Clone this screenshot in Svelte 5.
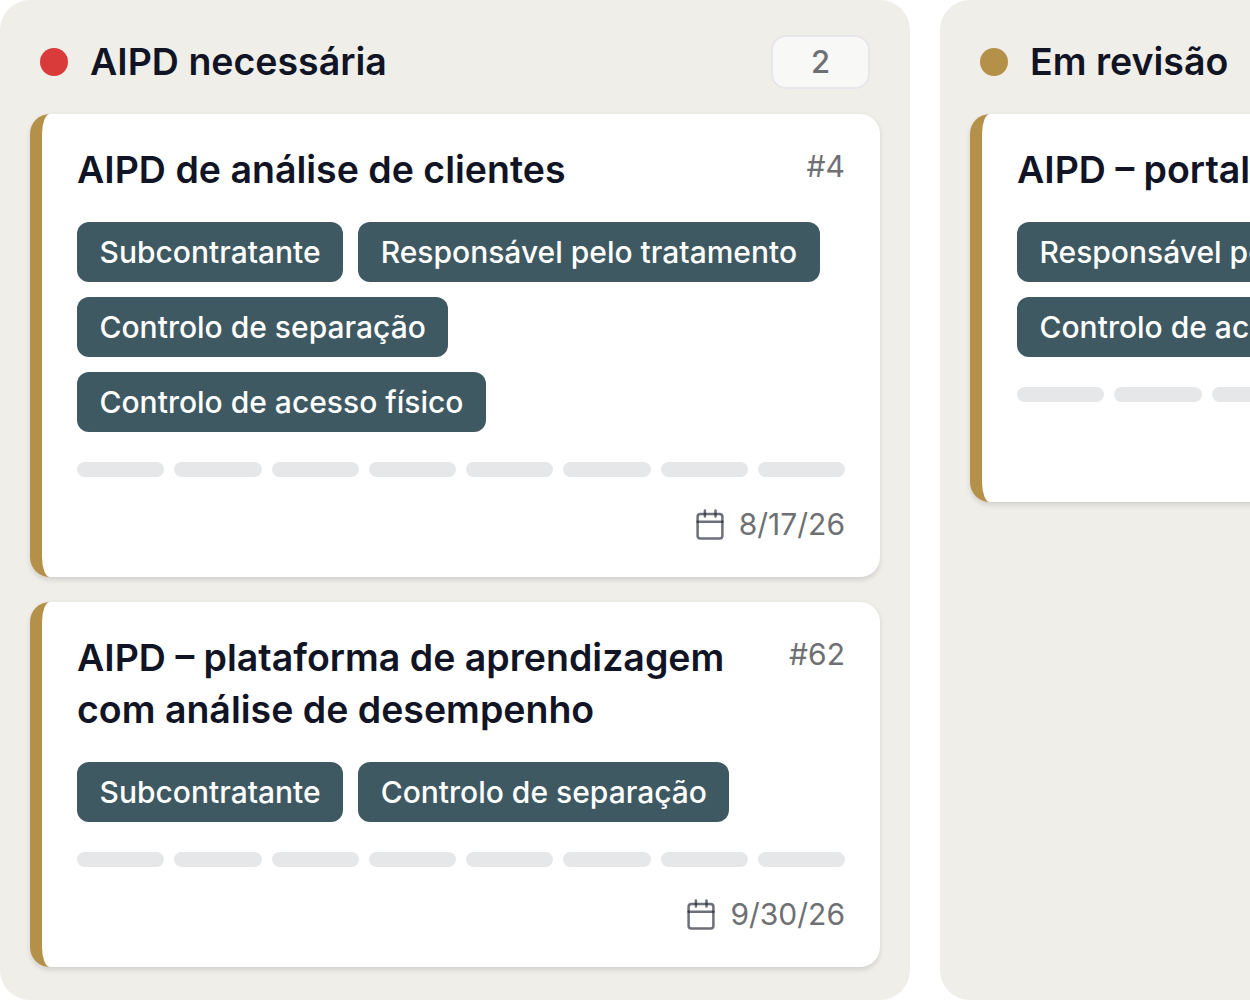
<script lang="ts">
	type Card = {
		id?: number;
		title: string;
		tags: string[];
		due?: string;
	};

	type Column = {
		name: string;
		tone: 'danger' | 'warning';
		count?: number;
		cards: Card[];
	};

	const STEPS = 8;

	const columns: Column[] = [
		{
			name: 'AIPD necessária',
			tone: 'danger',
			count: 2,
			cards: [
				{
					id: 4,
					title: 'AIPD de análise de clientes',
					tags: [
						'Subcontratante',
						'Responsável pelo tratamento',
						'Controlo de separação',
						'Controlo de acesso físico'
					],
					due: '8/17/26'
				},
				{
					id: 62,
					title: 'AIPD – plataforma de aprendizagem com análise de desempenho',
					tags: ['Subcontratante', 'Controlo de separação'],
					due: '9/30/26'
				}
			]
		},
		{
			name: 'Em revisão',
			tone: 'warning',
			cards: [
				{
					title: 'AIPD – portal',
					tags: ['Responsável pelo tratamento', 'Controlo de acesso físico']
				}
			]
		}
	];
</script>

<main class="board">
	{#each columns as column}
		<section class="column">
			<header class="column-head">
				<span class="dot {column.tone}"></span>
				<h2>{column.name}</h2>
				{#if column.count !== undefined}
					<span class="count">{column.count}</span>
				{/if}
			</header>
			<div class="cards">
				{#each column.cards as card}
					<article class="card">
						<div class="card-head">
							<h3>{card.title}</h3>
							{#if card.id}<span class="id">#{card.id}</span>{/if}
						</div>
						<div class="tags">
							{#each card.tags as tag}
								<span class="tag">{tag}</span>
							{/each}
						</div>
						<div class="steps">
							{#each Array(STEPS) as _}
								<span class="step"></span>
							{/each}
						</div>
						<footer class="due">
							{#if card.due}
								<svg class="calendar" viewBox="0 0 30 32" aria-hidden="true">
									<rect x="2.6" y="5.9" width="24.8" height="24.6" rx="2.8" />
									<path d="M2.6 13.7h24.8" />
									<path d="M9.9 2.6v5.8M20.5 2.6v5.8" />
								</svg>
								<span>{card.due}</span>
							{/if}
						</footer>
					</article>
				{/each}
			</div>
		</section>
	{/each}
</main>

<style>
	:global(body) {
		background: #fff;
		overflow: hidden;
	}
	.board {
		display: flex;
		gap: 30px;
		width: 1250px;
		height: 1000px;
		overflow: hidden;
		font-family: Inter, 'Liberation Sans', sans-serif;
		color: #111424;
	}
	.column {
		flex: 0 0 910px;
		box-sizing: border-box;
		padding: 35px 30px 0;
		background: #efeee9;
		border-radius: 30px;
	}
	.column-head {
		display: flex;
		align-items: center;
		height: 54px;
		padding: 0 10px;
		margin-bottom: 25px;
	}
	.dot {
		width: 28px;
		height: 28px;
		margin-right: 22px;
		border-radius: 50%;
	}
	.danger {
		background: #d93b3b;
	}
	.warning {
		background: #b59049;
	}
	h2,
	h3 {
		margin: 0;
		font-size: 37.5px;
		font-weight: 600;
		line-height: 52.5px;
	}
	.count {
		box-sizing: border-box;
		width: 99px;
		height: 54px;
		margin-left: auto;
		border: 2.5px solid #e6e6eb;
		border-radius: 15px;
		background: #f8f8f7;
		color: #6e7074;
		font-size: 31px;
		font-weight: 500;
		line-height: 50px;
		text-align: center;
	}
	.cards {
		display: flex;
		flex-direction: column;
		gap: 25px;
	}
	.card {
		padding: 30px 35px;
		border-left: 12px solid #b59049;
		border-radius: 20px;
		background: #fff;
		box-shadow: 0 2.5px 5px rgba(0, 0, 0, 0.12);
	}
	.card-head {
		display: flex;
		justify-content: space-between;
		gap: 20px;
	}
	.id {
		color: #6e7074;
		font-size: 30px;
		line-height: 45px;
	}
	.tags {
		display: flex;
		flex-wrap: wrap;
		gap: 15px;
		margin-top: 25px;
	}
	.tag {
		padding: 0 22.5px;
		border-radius: 12px;
		background: #3f5963;
		color: #fff;
		font-size: 30px;
		font-weight: 500;
		line-height: 60px;
		white-space: nowrap;
	}
	.steps {
		display: flex;
		gap: 10px;
		margin-top: 30px;
	}
	.step {
		flex: 1;
		height: 15px;
		border-radius: 7.5px;
		background: #e5e7e9;
	}
	.due {
		display: flex;
		align-items: center;
		justify-content: flex-end;
		gap: 14px;
		height: 45px;
		margin-top: 25px;
		color: #6e7074;
		font-size: 30px;
	}
	/* translucent stroke, so the rings read darker where they cross the frame */
	.calendar {
		width: 30px;
		height: 32px;
		fill: none;
		stroke: rgba(35, 38, 52, 0.66);
		stroke-width: 2.5;
		stroke-linecap: round;
		stroke-linejoin: round;
	}
</style>
